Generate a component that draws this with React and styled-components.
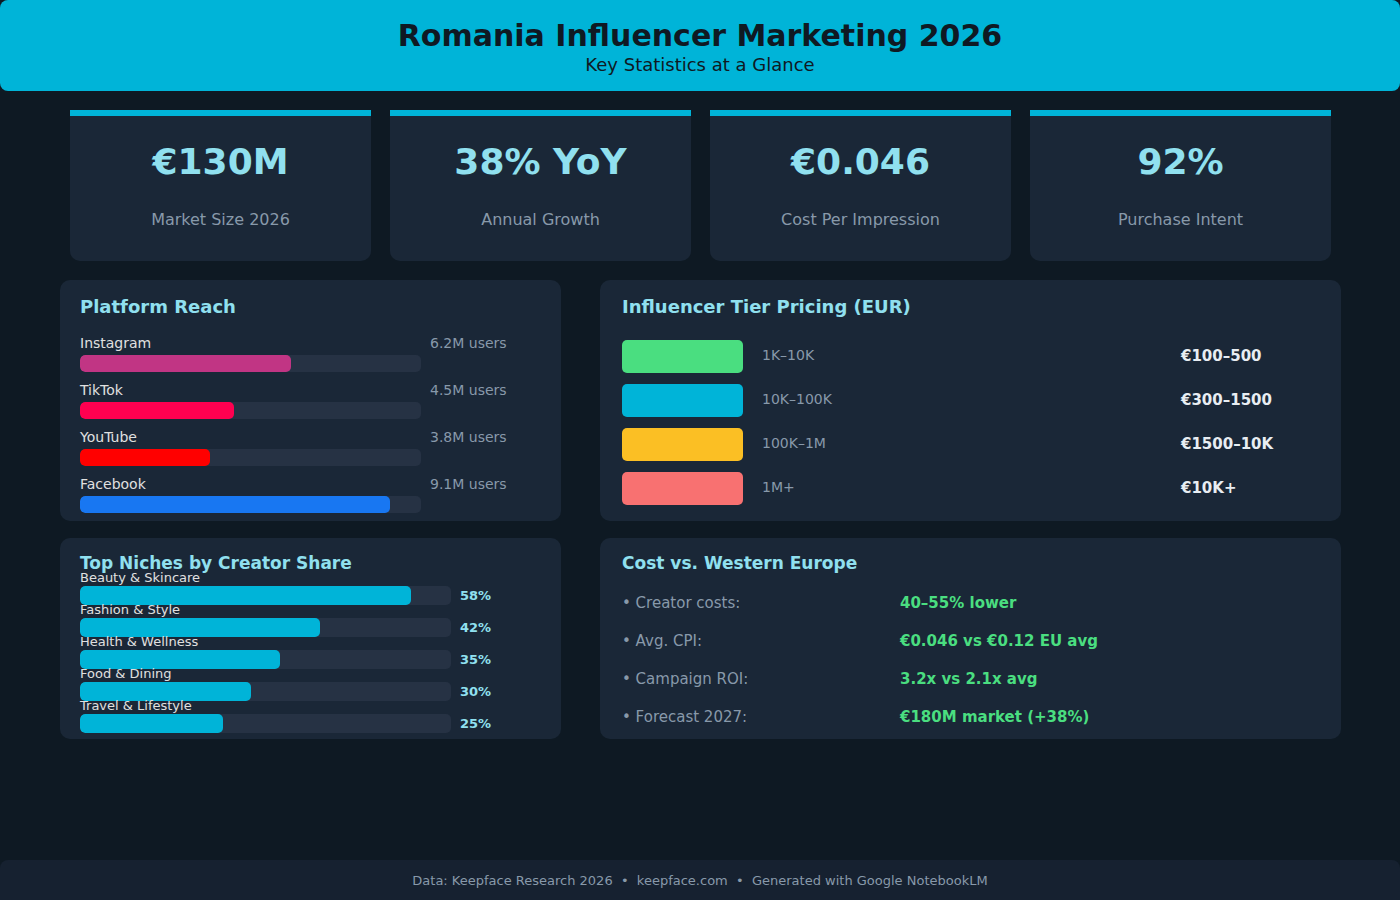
import styled, { createGlobalStyle } from "styled-components";

const GlobalStyle = createGlobalStyle`
  html, body {
    margin: 0;
    padding: 0;
    background: #0e1923;
    font-family: "DejaVu Sans", sans-serif;
  }
`;

const Page = styled.div`
  width: 1400px;
  height: 900px;
  display: flex;
  flex-direction: column;
  overflow: hidden;
  background: #0e1923;
`;

const Header = styled.header`
  height: 91px;
  box-sizing: border-box;
  padding-top: 18px;
  background: #00b4d8;
  border-radius: 8px;
  color: #0f1923;
  text-align: center;
`;

const Title = styled.h1`
  margin: 0;
  font-size: 30px;
  line-height: 36px;
  font-weight: 700;
`;

const Subtitle = styled.div`
  font-size: 18px;
  line-height: 20px;
  margin-top: 1px;
`;

const StatRow = styled.section`
  display: grid;
  grid-template-columns: repeat(4, 301px);
  gap: 19px;
  padding: 19px 0 0 70px;
`;

const StatCard = styled.div`
  height: 151px;
  box-sizing: border-box;
  padding-top: 25px;
  background: #1a2737;
  border-top: 6px solid #00b4d8;
  border-radius: 0 0 10px 10px;
  text-align: center;
`;

const StatValue = styled.div`
  font-size: 36px;
  line-height: 42px;
  font-weight: 700;
  color: #90e0ef;
`;

const StatLabel = styled.div`
  margin-top: 27px;
  font-size: 16px;
  line-height: 20px;
  color: #8899aa;
`;

const PanelGrid = styled.section`
  display: grid;
  grid-template-columns: 501px 741px;
  grid-template-rows: 241px 201px;
  column-gap: 39px;
  row-gap: 17px;
  padding: 19px 0 0 60px;
`;

const Panel = styled.div`
  box-sizing: border-box;
  padding: ${(p) => p.$pad || "16px 20px 0"};
  background: #1a2737;
  border-radius: 10px;
`;

const PanelTitle = styled.h2`
  margin: 0;
  font-size: ${(p) => p.$size || 18}px;
  line-height: 22px;
  font-weight: 700;
  color: #90e0ef;
`;

const ReachList = styled.div`
  margin-top: 17px;
  display: flex;
  flex-direction: column;
  gap: 10px;
`;

const ReachRow = styled.div`
  display: grid;
  grid-template-columns: 341px auto;
  column-gap: 9px;
  grid-template-rows: 16px 17px;
  row-gap: 4px;
`;

const ReachName = styled.div`
  font-size: 14px;
  line-height: 16px;
  color: #e0e0e0;
`;

const ReachUsers = styled.div`
  font-size: 14px;
  line-height: 16px;
  color: #8899aa;
`;

const Track = styled.div`
  height: ${(p) => p.$h}px;
  width: ${(p) => p.$w}px;
  background: #263244;
  border-radius: 5px;
  overflow: hidden;
`;

const Fill = styled.div`
  height: 100%;
  background: ${(p) => p.$color};
  border-radius: 5px;
`;

const TierList = styled.div`
  margin-top: 22px;
  display: flex;
  flex-direction: column;
  gap: 11px;
`;

const TierRow = styled.div`
  display: grid;
  grid-template-columns: 121px 400px auto;
  column-gap: 19px;
  align-items: center;
`;

const TierSwatch = styled.div`
  height: 33px;
  background: ${(p) => p.$color};
  border-radius: 5px;
`;

const TierName = styled.div`
  margin-bottom: 3px;
  font-size: 14px;
  color: #8899aa;
`;

const TierPrice = styled.div`
  margin-bottom: 2px;
  font-size: 15px;
  font-weight: 700;
  color: #e8edf2;
`;

const NicheList = styled.div`
  display: flex;
  flex-direction: column;
  gap: 1px;
`;

const NicheRow = styled.div`
  display: grid;
  grid-template-columns: 371px auto;
  column-gap: 9px;
  grid-template-rows: 12px 19px;
  align-items: center;
`;

const NicheName = styled.div`
  grid-column: 1 / 3;
  align-self: start;
  font-size: 13px;
  line-height: 8px;
  color: #e0e0e0;
`;

const NichePct = styled.div`
  margin-bottom: 1px;
  font-size: 13px;
  font-weight: 700;
  color: #90e0ef;
`;

const CostList = styled.div`
  margin-top: 20px;
  display: flex;
  flex-direction: column;
  gap: 20px;
`;

const CostRow = styled.div`
  display: grid;
  grid-template-columns: 278px auto;
  font-size: 15px;
  line-height: 18px;
`;

const CostLabel = styled.div`
  color: #8899aa;
`;

const CostValue = styled.div`
  font-weight: 700;
  color: #4ade80;
`;

const Footer = styled.footer`
  margin-top: auto;
  height: 40px;
  box-sizing: border-box;
  padding-top: 1px;
  display: flex;
  align-items: center;
  justify-content: center;
  background: #162130;
  border-radius: 8px 8px 0 0;
  font-size: 13px;
  color: #8899aa;
  white-space: pre;
`;

const stats = [
  ["€130M", "Market Size 2026"],
  ["38% YoY", "Annual Growth"],
  ["€0.046", "Cost Per Impression"],
  ["92%", "Purchase Intent"],
];

const platforms = [
  { name: "Instagram", users: "6.2M users", width: 211, color: "#c13584" },
  { name: "TikTok", users: "4.5M users", width: 154, color: "#ff0050" },
  { name: "YouTube", users: "3.8M users", width: 130, color: "#ff0000" },
  { name: "Facebook", users: "9.1M users", width: 310, color: "#1877f2" },
];

const tiers = [
  { name: "1K–10K", price: "€100–500", color: "#4ade80" },
  { name: "10K–100K", price: "€300–1500", color: "#00b4d8" },
  { name: "100K–1M", price: "€1500–10K", color: "#fbbf24" },
  { name: "1M+", price: "€10K+", color: "#f87171" },
];

const niches = [
  { name: "Beauty & Skincare", pct: 58, width: 331 },
  { name: "Fashion & Style", pct: 42, width: 240 },
  { name: "Health & Wellness", pct: 35, width: 200 },
  { name: "Food & Dining", pct: 30, width: 171 },
  { name: "Travel & Lifestyle", pct: 25, width: 143 },
];

const costs = [
  ["• Creator costs:", "40–55% lower"],
  ["• Avg. CPI:", "€0.046 vs €0.12 EU avg"],
  ["• Campaign ROI:", "3.2x vs 2.1x avg"],
  ["• Forecast 2027:", "€180M market (+38%)"],
];

export default function App() {
  return (
    <Page>
      <GlobalStyle />
      <Header>
        <Title>Romania Influencer Marketing 2026</Title>
        <Subtitle>Key Statistics at a Glance</Subtitle>
      </Header>
      <StatRow>
        {stats.map(([value, label]) => (
          <StatCard key={label}>
            <StatValue>{value}</StatValue>
            <StatLabel>{label}</StatLabel>
          </StatCard>
        ))}
      </StatRow>
      <PanelGrid>
        <Panel>
          <PanelTitle>Platform Reach</PanelTitle>
          <ReachList>
            {platforms.map((p) => (
              <ReachRow key={p.name}>
                <ReachName>{p.name}</ReachName>
                <ReachUsers>{p.users}</ReachUsers>
                <Track $w={341} $h={17}>
                  <Fill $color={p.color} style={{ width: p.width }} />
                </Track>
              </ReachRow>
            ))}
          </ReachList>
        </Panel>
        <Panel $pad="16px 22px 0">
          <PanelTitle>Influencer Tier Pricing (EUR)</PanelTitle>
          <TierList>
            {tiers.map((t) => (
              <TierRow key={t.name}>
                <TierSwatch $color={t.color} />
                <TierName>{t.name}</TierName>
                <TierPrice>{t.price}</TierPrice>
              </TierRow>
            ))}
          </TierList>
        </Panel>
        <Panel $pad="14px 20px 0">
          <PanelTitle $size={17}>Top Niches by Creator Share</PanelTitle>
          <NicheList>
            {niches.map((n) => (
              <NicheRow key={n.name}>
                <NicheName>{n.name}</NicheName>
                <Track $w={371} $h={19}>
                  <Fill $color="#00b4d8" style={{ width: n.width }} />
                </Track>
                <NichePct>{n.pct}%</NichePct>
              </NicheRow>
            ))}
          </NicheList>
        </Panel>
        <Panel $pad="14px 22px 0">
          <PanelTitle $size={17}>Cost vs. Western Europe</PanelTitle>
          <CostList>
            {costs.map(([label, value]) => (
              <CostRow key={label}>
                <CostLabel>{label}</CostLabel>
                <CostValue>{value}</CostValue>
              </CostRow>
            ))}
          </CostList>
        </Panel>
      </PanelGrid>
      <Footer>Data: Keepface Research 2026  •  keepface.com  •  Generated with Google NotebookLM</Footer>
    </Page>
  );
}
